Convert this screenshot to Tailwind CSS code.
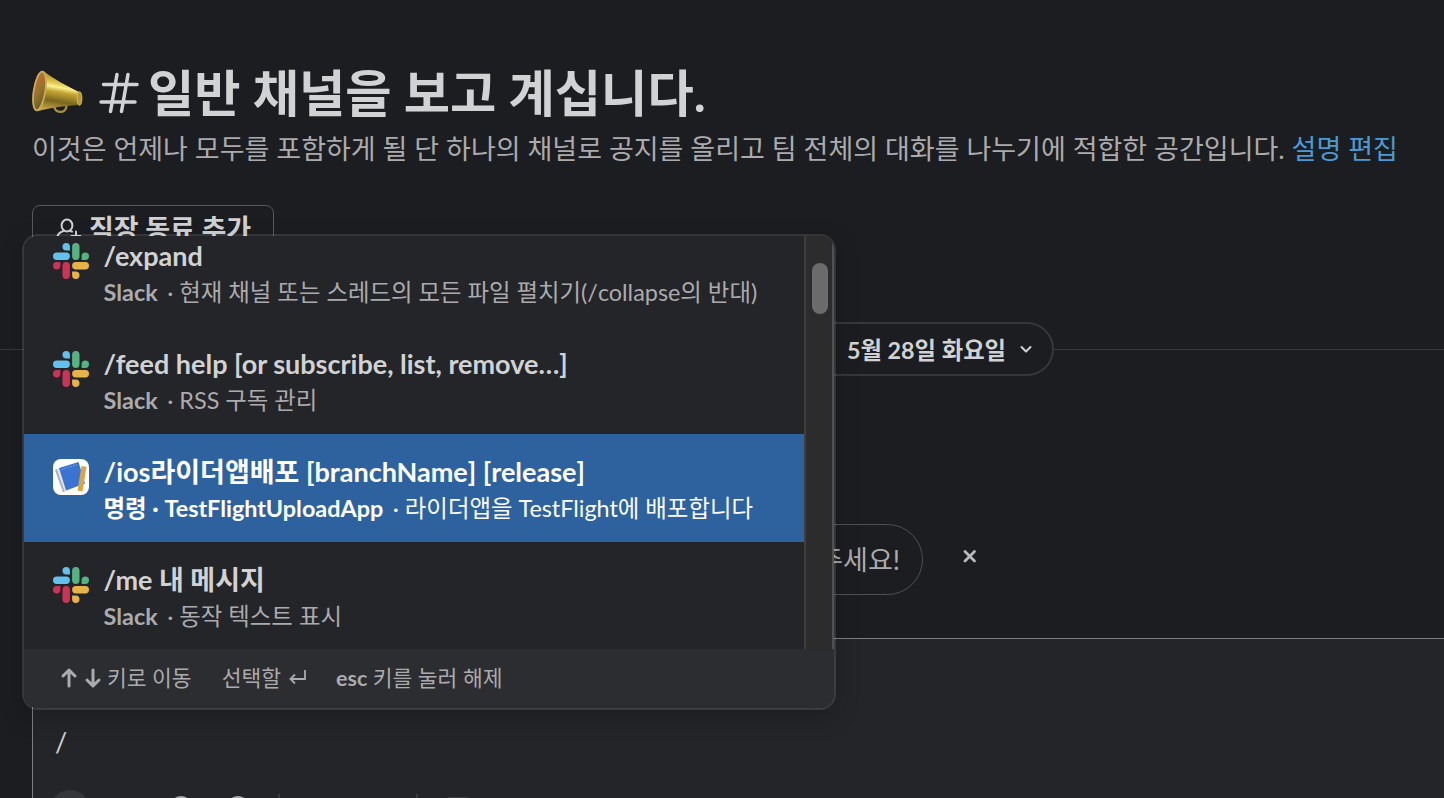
<!DOCTYPE html>
<html lang="ko">
<head>
  <meta charset="UTF-8">
  <title>Slack</title>
  <meta name="viewport" content="width=device-width, initial-scale=1.0">
  <script src="https://cdn.jsdelivr.net/npm/@tailwindcss/browser@4"></script>
</head>
<body class="relative h-screen overflow-hidden bg-[#1c1d20] font-[Lato,'Noto_Sans_CJK_KR',sans-serif] text-[#d1d2d3]">
  <!-- Slack logo, shared by the command rows -->
  <svg class="hidden">
    <symbol id="slack" viewBox="0 0 36 36">
      <path fill="#63c1ee" d="M13.2 0a3.7 3.7 0 0 1 3.7 3.7v3.7h-3.7a3.7 3.7 0 0 1 0-7.4zM3.7 9.5h9.5a3.7 3.7 0 0 1 0 7.4H3.7a3.7 3.7 0 0 1 0-7.4z"/>
      <path fill="#56b280" d="M19.1 3.7a3.7 3.7 0 0 1 7.4 0v9.5a3.7 3.7 0 0 1-7.4 0zM28.6 16.9v-3.7a3.7 3.7 0 1 1 3.7 3.7z"/>
      <path fill="#cd3359" d="M7.4 19.1v3.7a3.7 3.7 0 1 1-3.7-3.7zM9.5 22.8a3.7 3.7 0 0 1 7.4 0v9.5a3.7 3.7 0 0 1-7.4 0z"/>
      <path fill="#e5b347" d="M22.8 19.1h9.5a3.7 3.7 0 0 1 0 7.4h-9.5a3.7 3.7 0 0 1 0-7.4zM19.1 28.6h3.7a3.7 3.7 0 1 1-3.7 3.7z"/>
    </symbol>
  </svg>

  <main class="flex h-[798px] flex-col">
    <!-- Channel intro -->
    <header class="px-8 pt-[62px] whitespace-nowrap">
      <h1 class="flex h-[62px] items-center text-[50.3px] font-bold">
        <svg class="w-[52px] h-[46px] shrink-0" viewBox="0 0 52 46">
          <defs>
            <linearGradient id="horn" x1="0.62" y1="0.05" x2="0.45" y2="1">
              <stop offset="0" stop-color="#9c8226"/>
              <stop offset=".25" stop-color="#d9bf4a"/>
              <stop offset=".38" stop-color="#fbf08a"/>
              <stop offset=".5" stop-color="#c4a535"/>
              <stop offset=".75" stop-color="#7a671f"/>
              <stop offset="1" stop-color="#c4a640"/>
            </linearGradient>
            <linearGradient id="bell" x1="0" y1="0" x2="0.6" y2="1">
              <stop offset="0" stop-color="#a9842b"/>
              <stop offset=".35" stop-color="#b56a30"/>
              <stop offset=".6" stop-color="#8f7630"/>
              <stop offset="1" stop-color="#6e5a22"/>
            </linearGradient>
          </defs>
          <path d="M22 35c0 9 12 9 12.500 1" fill="none" stroke="#a8913c" stroke-width="2.400"/>
          <path d="M12 1.500c9 7 22 14 35 20.500v13c-14 .5-28 2.500-41 6z" fill="url(#horn)"/>
          <ellipse cx="7.500" cy="21" rx="5.800" ry="19.500" transform="rotate(9 7.500 21)" fill="url(#bell)" stroke="#c9ad58" stroke-width="1.800"/>
          <ellipse cx="47.500" cy="28.500" rx="2.400" ry="6.800" fill="#b5983a" stroke="#d3bb55"/>
        </svg>
        <svg class="ml-[15px] w-[40px] h-[42px] shrink-0" viewBox="0 0 40 42" fill="none" stroke="#d1d2d3" stroke-width="3.500" stroke-linecap="round">
          <path d="M4.500 12.500h33.500M2 30h34M18 2.500l-6.500 37M29 2.500l-6.500 37"/>
        </svg>
        <span class="ml-[9px]">일반 채널을 보고 계십니다.</span>
      </h1>
      <p class="mt-1.5 h-[38px] leading-[38px] text-[27px] text-[#ababad]">이것은 언제나 모두를 포함하게 될 단 하나의 채널로 공지를 올리고 팀 전체의 대화를 나누기에 적합한 공간입니다. <a class="text-[#4a9bd3]">설명 편집</a></p>
      <button class="mt-[37px] flex h-[56px] w-[242px] items-start rounded-lg border border-[#56585c] pl-[22px] text-[27px] font-bold leading-[46px]">
        <svg class="mt-3 mr-2 w-[26px] h-[26px]" viewBox="0 0 26 26" fill="none" stroke="currentColor" stroke-width="2" stroke-linecap="round">
          <ellipse cx="12" cy="7.500" rx="5.400" ry="6"/>
          <path d="M2 20c.5-3.500 3-6 6.500-7M15.500 13l1.500.7M21 13.500v9M16.500 18h9"/>
        </svg>
        <span>직장 동료 추가</span>
      </button>
    </header>

    <!-- Date divider -->
    <div class="mt-[61px] flex h-[54px] items-center">
      <div class="h-px flex-1 bg-[#35373b]"></div>
      <button class="flex h-[54px] w-[663px] items-center justify-end rounded-full border-2 border-[#35373b] pr-[18px] text-[23.3px] font-bold whitespace-nowrap">
        <span class="pt-0.5">5월 28일 화요일</span>
        <svg class="ml-[12px] w-[16px] h-[16px]" viewBox="0 0 16 16" fill="none" stroke="currentColor" stroke-width="2" stroke-linecap="round" stroke-linejoin="round"><path d="M3.500 6L8 10.500l4.500-4.500"/></svg>
      </button>
      <div class="h-px w-[390px] bg-[#35373b]"></div>
    </div>

    <!-- Suggestion pill -->
    <div class="mt-[148px] flex h-[71px] items-center pl-8">
      <div class="flex h-[71px] w-[891px] items-center justify-end rounded-full border border-[#4d4f53] pr-[22px] text-[27px] text-[#ababad]"><span class="pt-0.5">인사해 주세요!</span></div>
      <svg class="ml-[38px] mb-1.5 w-[18px] h-[18px]" viewBox="0 0 18 18" stroke="#b9babd" stroke-width="2.800" stroke-linecap="round"><path d="M4 3.500l9.500 9.500M13.500 3.500L4 13"/></svg>
    </div>

    <!-- Composer -->
    <section class="ml-8 mt-[43px] flex-1 border-l border-t border-[#7d7e81] bg-[#242529] overflow-hidden">
      <div class="mt-[81px] pl-[22px] h-[44px] leading-[44px] text-[27px]">/</div>
      <div class="mt-[26px] flex h-[40px] items-start">
        <div class="ml-[17px] size-[40px] rounded-full bg-[#35363a]"></div>
        <div class="ml-[80px] mt-[6px] size-[22px] rounded-full border-3 border-[#ababad]"></div>
        <div class="ml-[35px] mt-[6px] size-[22px] rounded-full border-3 border-[#ababad]"></div>
        <div class="ml-[29px] mt-1 h-9 w-[2px] bg-[#3a3b3f]"></div>
        <div class="ml-[136px] mt-1 h-9 w-[2px] bg-[#3a3b3f]"></div>
        <div class="ml-[28px] mt-[7px] h-6 w-6 rounded border-2 border-[#3f4044]"></div>
      </div>
    </section>
  </main>

  <!-- Slash command menu -->
  <div class="absolute left-[22px] top-[234px] flex h-[476px] w-[814px] flex-col overflow-hidden rounded-[16px] border-2 border-[#e8e8e8]/13 bg-[#242529] bg-clip-padding shadow-[0_8px_24px_rgba(0,0,0,0.2)] whitespace-nowrap">
    <div class="flex h-[413px] overflow-hidden">
      <ul class="-mt-[18px] w-[780px] shrink-0">
        <li class="flex h-[108px] pl-[29px] pt-[20px]">
          <svg class="mt-[5px] size-9"><use href="#slack"/></svg>
          <div class="ml-[14.6px]">
            <div class="h-9 leading-9 text-[27px] font-bold">/expand</div>
            <div class="h-9 leading-9 text-[23.4px] text-[#ababad]"><b>Slack</b><span class="ml-[9.5px]">· 현재 채널 또는 스레드의 모든 파일 펼치기(/collapse의 반대)</span></div>
          </div>
        </li>
        <li class="flex h-[108px] pl-[29px] pt-[20px]">
          <svg class="mt-[5px] size-9"><use href="#slack"/></svg>
          <div class="ml-[14.6px]">
            <div class="h-9 leading-9 text-[27px] font-bold">/feed help [or subscribe, list, remove…]</div>
            <div class="h-9 leading-9 text-[23.4px] text-[#ababad]"><b>Slack</b><span class="ml-[9.5px]">· RSS 구독 관리</span></div>
          </div>
        </li>
        <li class="flex h-[108px] bg-[#2d629f] pl-[29px] pt-[20px] text-white">
          <svg class="mt-[5px] size-9" viewBox="0 0 36 36">
            <rect width="36" height="36" rx="8" fill="#fff"/>
            <path d="M2 11l2-1.200 8 22.700-2 1z" fill="#b4b4b8"/>
            <path d="M4 9.800l2-.8 7.500 22.500-1.500 1z" fill="#e4e4e7"/>
            <path d="M6 9l19.500-6L32 24.500 13 31.500z" fill="#3a73d2"/>
            <path d="M8.500 10.500l15.500-5" fill="none" stroke="#7fa8ea" stroke-width=".8" stroke-dasharray="2 1"/>
            <path d="M28.500 7l5 .7-4 24.800-5-1z" fill="#d9a545"/>
          </svg>
          <div class="ml-[14.6px]">
            <div class="h-9 leading-9 text-[27px] font-bold">/ios라이더앱배포 [branchName] [release]</div>
            <div class="h-9 leading-9 text-[23.4px]"><b>명령 · TestFlightUploadApp</b><span class="ml-[9.5px]">· 라이더앱을 TestFlight에 배포합니다</span></div>
          </div>
        </li>
        <li class="flex h-[108px] pl-[29px] pt-[20px]">
          <svg class="mt-[5px] size-9"><use href="#slack"/></svg>
          <div class="ml-[14.6px]">
            <div class="h-9 leading-9 text-[27px] font-bold">/me 내 메시지</div>
            <div class="h-9 leading-9 text-[23.4px] text-[#ababad]"><b>Slack</b><span class="ml-[9.5px]">· 동작 텍스트 표시</span></div>
          </div>
        </li>
      </ul>
      <div class="w-[30px] border-x-2 border-l-[#3e3e3e] border-r-[#515151] bg-[#2c2c2c] pl-[6px] pt-[27px]">
        <div class="h-[51px] w-4 rounded-full bg-[#6b6b6b]"></div>
      </div>
    </div>
    <div class="flex flex-1 items-center bg-[#2c2d30] pb-px pl-[36px] text-[21.5px] text-[#ababad]">
      <svg class="w-[42px] h-[22px]" viewBox="0 0 42 22" fill="none" stroke="currentColor" stroke-width="3" stroke-linecap="round" stroke-linejoin="round"><path d="M9 19V3.500M3 9l6-6 6 6M33 3v15.500M27 13l6 6 6-6"/></svg>
      <span class="ml-[5px]">키로 이동</span>
      <span class="ml-[30px]">선택할</span>
      <svg class="ml-[7px] mb-0.5 w-[20px] h-[18px]" viewBox="0 0 20 18" fill="none" stroke="currentColor" stroke-width="1.800"><path d="M17 2v9H3M7 6.500L2.500 11 7 15.500"/></svg>
      <span class="ml-[28px]"><b>esc</b> 키를 눌러 해제</span>
    </div>
  </div>
</body>
</html>
